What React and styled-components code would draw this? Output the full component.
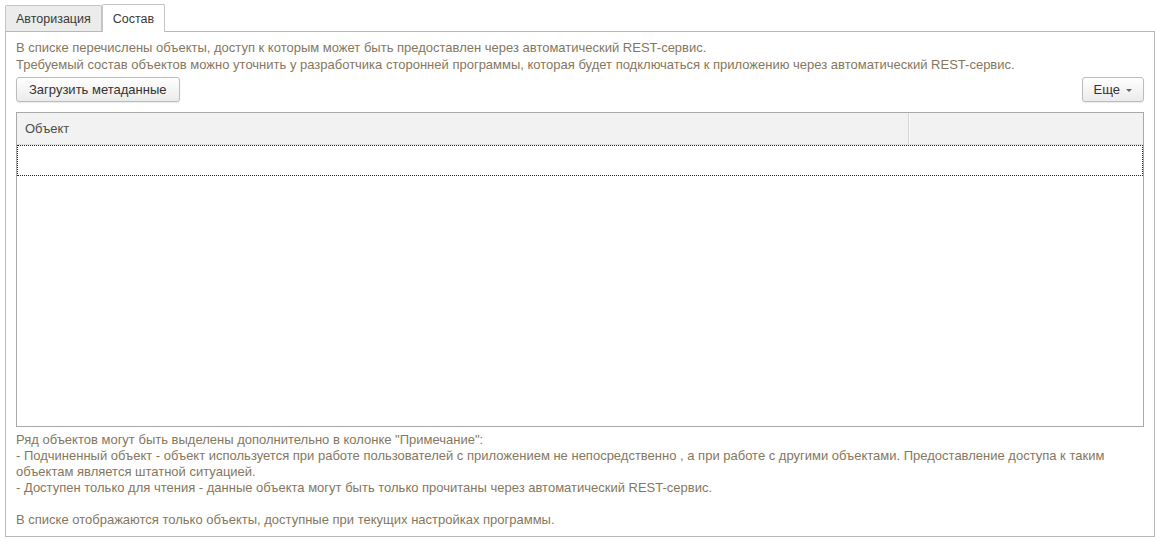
import React from 'react';
import styled, { createGlobalStyle } from 'styled-components';

const GlobalStyle = createGlobalStyle`
  html, body {
    margin: 0;
    padding: 0;
    background: #ffffff;
  }
  body {
    font-family: "Liberation Sans", Arial, sans-serif;
    font-size: 13px;
  }
`;

const Page = styled.div`
  width: 1155px;
  height: 545px;
  box-sizing: border-box;
  padding: 4px 0 0 5px;
`;

const TabBar = styled.div`
  display: flex;
  align-items: flex-end;
  height: 27px;
`;

const Tab = styled.div`
  position: relative;
  z-index: ${({ active }) => (active ? 2 : 1)};
  box-sizing: border-box;
  height: ${({ active }) => (active ? '28px' : '26px')};
  margin-bottom: ${({ active }) => (active ? '-1px' : '0')};
  padding: 0 10px;
  padding-top: ${({ active }) => (active ? '0' : '1px')};
  display: flex;
  align-items: center;
  background: ${({ active }) => (active ? '#ffffff' : '#ececec')};
  border: 1px solid #c4c4c4;
  border-bottom: none;
  border-radius: 2px 2px 0 0;
  color: #3a3a3a;
  font-size: 12.5px;
`;

const Panel = styled.div`
  box-sizing: border-box;
  height: 506px;
  border: 1px solid #b8b8b8;
  padding: 7px 10px 8px 10px;
  display: flex;
  flex-direction: column;
`;

const Info = styled.div`
  color: #85775e;
  line-height: ${({ lh }) => lh || 17}px;
  white-space: pre-line;
`;

const Toolbar = styled.div`
  display: flex;
  justify-content: space-between;
  margin: 4px 0 10px;
`;

const Button = styled.button`
  box-sizing: border-box;
  height: 25px;
  padding: 0 ${({ px }) => px || 12}px;
  display: flex;
  align-items: center;
  gap: 6px;
  font-family: "Liberation Sans", Arial, sans-serif;
  font-size: 13px;
  color: #333333;
  background: linear-gradient(#ffffff, #ebebeb);
  border: 1px solid #bcbcbc;
  border-radius: 3px;
  box-shadow: 0 1px 1px rgba(0, 0, 0, 0.08);
`;

const Caret = styled.span`
  width: 0;
  height: 0;
  border-left: 3px solid transparent;
  border-right: 3px solid transparent;
  border-top: 3px solid #666666;
  margin-top: 1px;
`;

const Table = styled.div`
  box-sizing: border-box;
  height: 315px;
  border: 1px solid #a9a9a9;
  display: flex;
  flex-direction: column;
`;

const HeadRow = styled.div`
  display: flex;
  height: 31px;
  background: #f2f2f2;
  border-bottom: 1px solid #e0e0e0;
`;

const HeadCell = styled.div`
  box-sizing: border-box;
  display: flex;
  align-items: center;
  padding-left: 8px;
  color: #4d4d4d;
  font-size: 13px;
  ${({ grow }) => (grow ? 'flex: 1;' : 'width: 234px;')}
  ${({ divider }) => (divider ? 'border-right: 1px solid #d6d6d6; box-shadow: 1px 0 0 #fafafa;' : '')}
`;

const FocusRow = styled.div`
  box-sizing: border-box;
  height: 31px;
  border: 1px dotted #222222;
`;

const Notes = styled(Info)`
  margin-top: 5px;
`;

export default function App() {
  return (
    <Page>
      <GlobalStyle />
      <TabBar>
        <Tab>Авторизация</Tab>
        <Tab active>Состав</Tab>
      </TabBar>
      <Panel>
        <Info>
          {'В списке перечислены объекты, доступ к которым может быть предоставлен через автоматический REST-сервис.\nТребуемый состав объектов можно уточнить у разработчика сторонней программы, которая будет подключаться к приложению через автоматический REST-сервис.'}
        </Info>
        <Toolbar>
          <Button>Загрузить метаданные</Button>
          <Button px={11}>
            Еще <Caret />
          </Button>
        </Toolbar>
        <Table>
          <HeadRow>
            <HeadCell grow divider>Объект</HeadCell>
            <HeadCell />
          </HeadRow>
          <FocusRow />
        </Table>
        <Notes lh={16}>
          {'Ряд объектов могут быть выделены дополнительно в колонке "Примечание":\n- Подчиненный объект - объект используется при работе пользователей с приложением не непосредственно , а при работе с другими объектами. Предоставление доступа к таким объектам является штатной ситуацией.\n- Доступен только для чтения - данные объекта могут быть только прочитаны через автоматический REST-сервис.\n\nВ списке отображаются только объекты, доступные при текущих настройках программы.'}
        </Notes>
      </Panel>
    </Page>
  );
}
